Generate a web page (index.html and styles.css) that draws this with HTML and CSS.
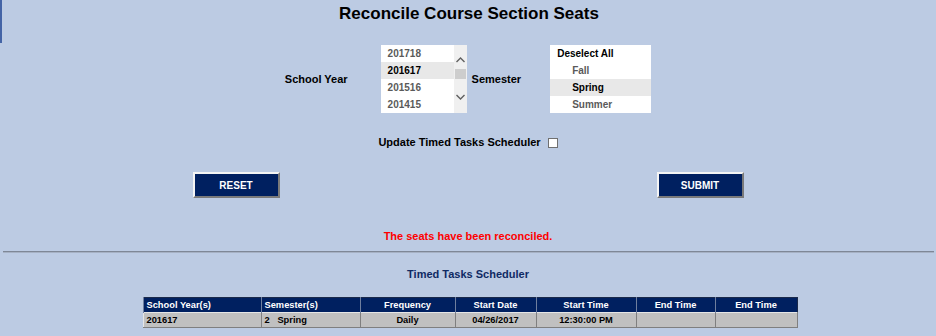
FILE: index.html
```html
<!DOCTYPE html>
<html lang="en">
<head>
    <meta charset="UTF-8">
    <title>Reconcile Course Section Seats</title>
    <link rel="stylesheet" href="styles.css">
</head>
<body>
    <div class="title-bar">
        <h1>Reconcile Course Section Seats</h1>
    </div>

    <div class="filters">
        <span class="label label-year">School Year</span>
        <div class="listbox year-list">
            <ul class="options">
                <li>201718</li>
                <li class="selected">201617</li>
                <li>201516</li>
                <li>201415</li>
            </ul>
            <svg class="scrollbar" width="13" height="68" viewBox="0 0 13 68">
                <rect x="0" y="0" width="13" height="68" fill="#f0f0f0"/>
                <polyline points="2.5,17 6.5,13 10.5,17" fill="none" stroke="#606060" stroke-width="1.4"/>
                <rect x="1" y="24" width="11" height="10" fill="#cdcdcd"/>
                <polyline points="2.5,50 6.5,54 10.5,50" fill="none" stroke="#606060" stroke-width="1.4"/>
            </svg>
        </div>
        <span class="label label-sem">Semester</span>
        <div class="listbox sem-list">
            <ul class="options">
                <li class="head">Deselect All</li>
                <li class="sub">Fall</li>
                <li class="sub selected">Spring</li>
                <li class="sub">Summer</li>
            </ul>
        </div>
    </div>

    <div class="update-row">
        <label for="update-chk">Update Timed Tasks Scheduler</label>
        <input type="checkbox" id="update-chk" class="checkbox">
    </div>

    <div class="buttons">
        <button class="btn">RESET</button>
        <button class="btn">SUBMIT</button>
    </div>

    <div class="message">The seats have been reconciled.</div>

    <div class="divider"></div>

    <h2 class="section-title">Timed Tasks Scheduler</h2>

    <div class="table-wrap">
        <table class="scheduler">
            <colgroup>
                <col style="width:118px">
                <col style="width:99px">
                <col style="width:95px">
                <col style="width:81px">
                <col style="width:100px">
                <col style="width:79px">
                <col style="width:82px">
            </colgroup>
            <thead>
                <tr>
                    <th class="left">School Year(s)</th>
                    <th class="left">Semester(s)</th>
                    <th>Frequency</th>
                    <th>Start Date</th>
                    <th>Start Time</th>
                    <th>End Time</th>
                    <th>End Time</th>
                </tr>
            </thead>
            <tbody>
                <tr>
                    <td class="left">201617</td>
                    <td class="left">2&nbsp;&nbsp;&nbsp;Spring</td>
                    <td>Daily</td>
                    <td>04/26/2017</td>
                    <td>12:30:00 PM</td>
                    <td></td>
                    <td></td>
                </tr>
            </tbody>
        </table>
    </div>
</body>
</html>
```

FILE: styles.css
```css
body {
    margin: 0;
    background-color: #bccbe3;
    font-family: 'Liberation Sans', Arial, sans-serif;
    color: #000;
}
.title-bar {
    height: 43px;
    border-left: 2px solid #4464a6;
    box-sizing: border-box;
    padding-top: 4px;
}
h1 {
    margin: 0;
    font-size: 17px;
    line-height: 20px;
    text-align: center;
}
.filters {
    margin-top: 2px;
    display: flex;
    justify-content: center;
    align-items: center;
}
.label {
    font-size: 11px;
    font-weight: bold;
}
.label-year {
    margin-right: 33px;
}
.label-sem {
    margin-left: 5px;
    margin-right: 29px;
}
.listbox {
    display: flex;
    background-color: #fff;
    height: 68px;
}
.options {
    list-style: none;
    margin: 0;
    padding: 0;
}
.options li {
    height: 17px;
    line-height: 17px;
    font-size: 10px;
    font-weight: bold;
    color: #5a5a5a;
}
.options li.selected {
    background-color: #e8e8e8;
    color: #000;
}
.year-list .options {
    width: 73px;
}
.year-list .options li {
    padding-left: 7px;
}
.sem-list .options {
    width: 101px;
}
.sem-list .head {
    padding-left: 7px;
    color: #000;
}
.sem-list .sub {
    padding-left: 22px;
}
.update-row {
    margin-top: 21px;
    display: flex;
    justify-content: center;
    align-items: center;
    height: 16px;
}
.update-row label {
    font-size: 11px;
    font-weight: bold;
    line-height: 16px;
}
.checkbox {
    appearance: none;
    width: 10px;
    height: 10px;
    margin: 1px 0 0 7px;
    border: 1px solid #707070;
    background-color: #fff;
    box-sizing: border-box;
}
.buttons {
    width: 551px;
    margin: 22px auto 0;
    display: flex;
    justify-content: space-between;
}
.btn {
    width: 87px;
    height: 26px;
    background-color: #002060;
    color: #fff;
    font-family: 'Liberation Sans', Arial, sans-serif;
    font-size: 10px;
    font-weight: bold;
    border: 2px solid;
    border-color: #f4f4f4 #7a7a7a #7a7a7a #f4f4f4;
    padding: 0;
    cursor: pointer;
}
.message {
    margin-top: 30px;
    text-align: center;
    font-size: 11px;
    font-weight: bold;
    line-height: 16px;
    color: #ff0000;
}
.divider {
    margin: 7px 2px 0 3px;
    border-top: 1px solid #7e8796;
    border-bottom: 1px solid #a6b1c4;
}
.section-title {
    margin: 13px 0 0;
    text-align: center;
    font-size: 11px;
    line-height: 16px;
    color: #0f2a63;
}
.table-wrap {
    margin-top: 15px;
    padding-left: 4px;
}
.scheduler {
    margin: 0 auto;
    width: 654px;
    table-layout: fixed;
    border-collapse: collapse;
    border: 1px solid #1b2a4a;
    font-size: 9.3px;
    font-weight: bold;
}
.scheduler th {
    height: 14px;
    padding: 0 3px;
    background-color: #002060;
    color: #fff;
    border-left: 1px solid #6f7f9e;
    text-align: center;
}
.scheduler td {
    height: 14px;
    padding: 0 3px;
    background-color: #c0c0c0;
    border: 1px solid;
    border-color: #e6e6e6 #7f7f7f #7f7f7f #e6e6e6;
    text-align: center;
}
.scheduler .left {
    text-align: left;
}
```
